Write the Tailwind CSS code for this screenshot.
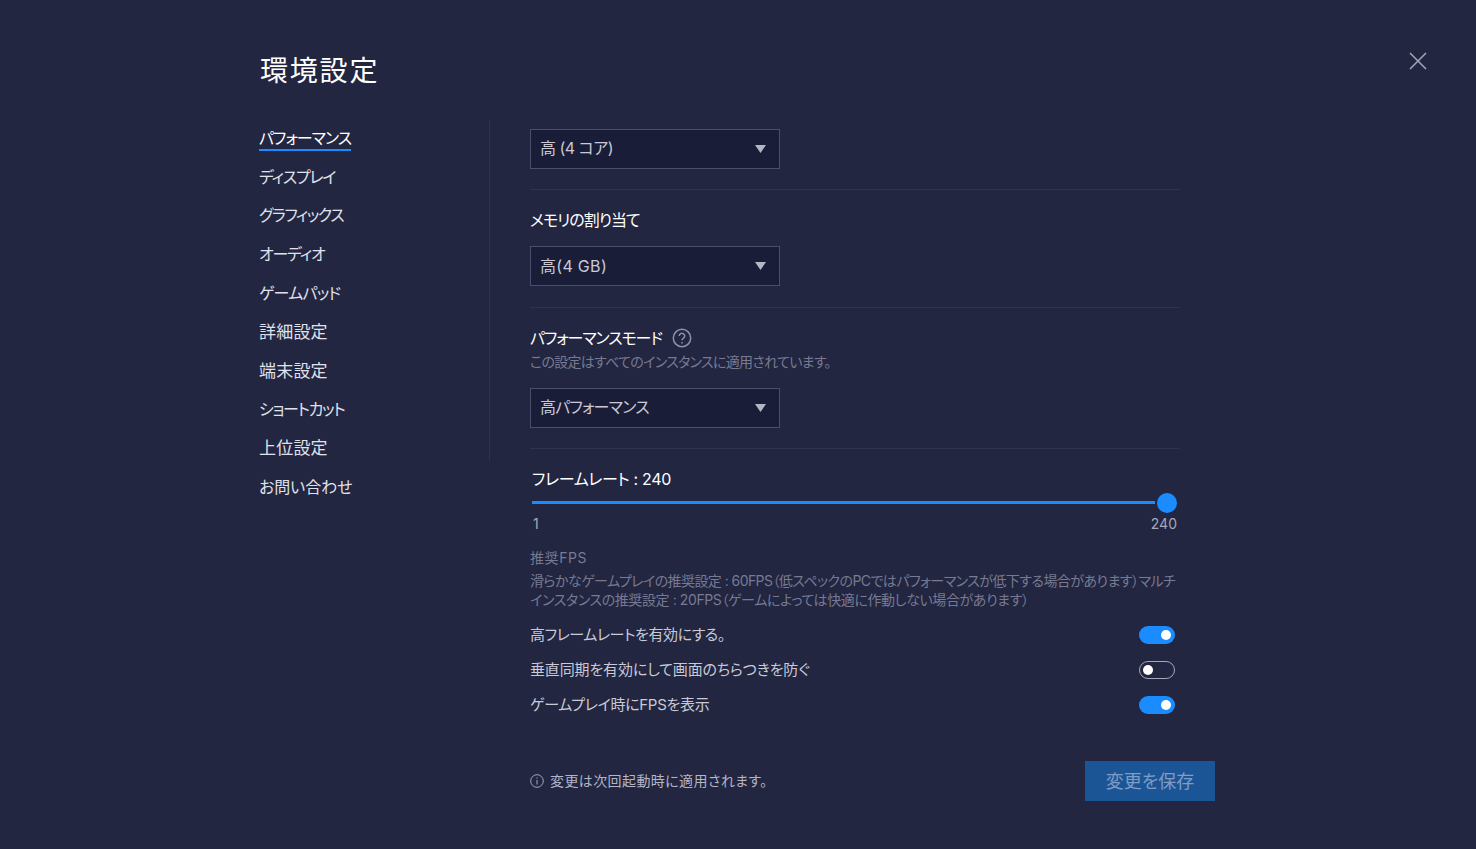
<!DOCTYPE html>
<html lang="ja">
<head>
<meta charset="utf-8">
<title>環境設定</title>
<script src="https://cdn.jsdelivr.net/npm/@tailwindcss/browser@4"></script>
</head>
<body class="bg-[#222641] font-['Inter','Noto_Sans_CJK_JP',sans-serif] [font-feature-settings:'palt'] text-[#e0e1ea] h-[849px] w-[1476px] overflow-hidden relative">

  <!-- close -->
  <button class="absolute left-[1409px] top-[52px] text-[#a5a7ba]">
    <svg width="18" height="18" viewBox="0 0 18 18" fill="none" stroke="currentColor" stroke-width="1.5"><path d="M1 1l16 16M17 1L1 17"/></svg>
  </button>

  <div class="pl-[260px] pt-[52px]">
    <h1 class="text-[28px] leading-[38px] text-white font-normal tracking-[1.800px]">環境設定</h1>

    <div class="flex mt-[30px]">
      <!-- Sidebar -->
      <div class="w-[230px] h-[340px] border-r border-[#2e3350] pt-[6px] text-[16px] leading-[24px]">
        <ul class="flex flex-col gap-[14.7px] -ml-[1px]">
          <li><span class="inline-block text-white border-b-2 border-[#1a8cff] leading-[22px] tracking-[-1px]">パフォーマンス</span></li>
          <li class="tracking-[-1.200px] -translate-y-px">ディスプレイ</li>
          <li class="tracking-[-1.500px] -translate-y-px">グラフィックス</li>
          <li class="tracking-[-1.200px] -translate-y-px">オーディオ</li>
          <li class="tracking-[-.8px] -translate-y-px">ゲームパッド</li>
          <li class="text-[17px] tracking-[.2px]">詳細設定</li>
          <li class="text-[17px] tracking-[.2px]">端末設定</li>
          <li class="tracking-[-1.300px] -translate-y-px">ショートカット</li>
          <li class="text-[17px] tracking-[.2px] -translate-y-px">上位設定</li>
          <li class="tracking-[-.1px]">お問い合わせ</li>
        </ul>
      </div>

      <!-- Main -->
      <div class="w-[685px] pl-[40px] pt-[9px]">
        <div class="w-[650px]">
          <div class="pb-[20px] border-b border-[#2e3350]">
            <div class="w-[250px] h-[40px] bg-[#1a1d38] border border-[#4a4e6b] pl-[9px] pr-[13px] flex items-center justify-between text-[16px] text-[#c9cad6]">
              <span class="tracking-[-.5px] -translate-y-px">高 (4 コア)</span>
              <svg width="11" height="8" viewBox="0 0 11 8" fill="#b4b5c6"><path d="M0 0h11L5.500 8z"/></svg>
            </div>
          </div>

          <div class="pt-[18px] pb-[21px] border-b border-[#2e3350]">
            <div class="text-[16px] leading-[24px] text-white mb-[14px] tracking-[-1px]">メモリの割り当て</div>
            <div class="w-[250px] h-[40px] bg-[#1a1d38] border border-[#4a4e6b] pl-[9px] pr-[13px] flex items-center justify-between text-[16px] text-[#c9cad6]">
              <span class="tracking-[.3px]">高(4 GB)</span>
              <svg width="11" height="8" viewBox="0 0 11 8" fill="#b4b5c6"><path d="M0 0h11L5.500 8z"/></svg>
            </div>
          </div>

          <div class="pt-[18px] pb-[20px] border-b border-[#2e3350]">
            <div class="flex items-center gap-[10px] text-[16px] leading-[24px] text-white">
              <span class="tracking-[-1.100px]">パフォーマンスモード</span>
              <svg width="20" height="20" viewBox="0 0 20 20" fill="none" stroke="#8f91a6" stroke-width="1.500"><circle cx="10" cy="10" r="8.700"/><path d="M7.300 8a2.700 2.700 0 1 1 4.200 2.200c-.9.6-1.500 1-1.500 2.100"/><path d="M10 14v1.500"/></svg>
            </div>
            <div class="text-[14px] leading-[24px] text-[#777a92] mb-[14px] tracking-[-.7px]">この設定はすべてのインスタンスに適用されています。</div>
            <div class="w-[250px] h-[40px] bg-[#1a1d38] border border-[#4a4e6b] pl-[9px] pr-[13px] flex items-center justify-between text-[16px] text-[#c9cad6]">
              <span class="tracking-[-.8px] -translate-y-px">高パフォーマンス</span>
              <svg width="11" height="8" viewBox="0 0 11 8" fill="#b4b5c6"><path d="M0 0h11L5.500 8z"/></svg>
            </div>
          </div>

          <div class="pt-[18px]">
            <div class="text-[16px] leading-[24px] text-white pl-[2px] tracking-[-.35px]">フレームレート : 240</div>
            <!-- slider -->
            <div class="relative h-[3px] w-[623px] ml-[2px] mt-[10px] bg-[#1a8cff]">
              <span class="absolute left-[625px] -top-[8px] w-[20px] h-[20px] rounded-full bg-[#1a8cff]"></span>
            </div>
            <div class="flex justify-between w-[647px] pl-[3px] mt-[10px] text-[14px] leading-[20px] text-[#a5a7ba]">
              <span>1</span><span>240</span>
            </div>
            <div class="text-[14px] leading-[20px] text-[#777a92] mt-[14px] tracking-[.6px]">推奨FPS</div>
            <p class="text-[14px] leading-[19px] text-[#777a92] mt-[3px] whitespace-nowrap"><span class="tracking-[-.56px]">滑らかなゲームプレイの推奨設定 : 60FPS（低スペックのPCではパフォーマンスが低下する場合があります）マルチ</span><br><span class="tracking-[-.4px]">インスタンスの推奨設定 : 20FPS（ゲームによっては快適に作動しない場合があります）</span></p>

            <div class="w-[645px] mt-[14px] flex flex-col gap-[11px] text-[15px] leading-[24px] text-[#c9cad6]">
              <div class="flex items-center justify-between">
                <span class="tracking-[-.45px]">高フレームレートを有効にする。</span>
                <span class="w-[36px] h-[18px] rounded-full bg-[#1a8cff] flex items-center justify-end pr-[4px]"><span class="w-[10px] h-[10px] rounded-full bg-white"></span></span>
              </div>
              <div class="flex items-center justify-between">
                <span class="tracking-[-.15px]">垂直同期を有効にして画面のちらつきを防ぐ</span>
                <span class="w-[36px] h-[18px] rounded-full border-[1.500px] border-[#a5a7ba] flex items-center pl-[3px]"><span class="w-[10px] h-[10px] rounded-full bg-white"></span></span>
              </div>
              <div class="flex items-center justify-between">
                <span class="tracking-[-.3px]">ゲームプレイ時にFPSを表示</span>
                <span class="w-[36px] h-[18px] rounded-full bg-[#1a8cff] flex items-center justify-end pr-[4px]"><span class="w-[10px] h-[10px] rounded-full bg-white"></span></span>
              </div>
            </div>
          </div>

          <!-- footer -->
          <div class="w-[685px] mt-[44px] flex items-center justify-between">
            <div class="flex items-center gap-[6px] text-[14px] text-[#b4b5c6] tracking-[.4px]">
              <svg width="14" height="14" viewBox="0 0 14 14" fill="none" stroke="#a5a7ba" stroke-width="1"><circle cx="7" cy="7" r="6.300"/><path d="M7 6v4.500M7 3.500v1.200"/></svg>
              <span class="-translate-y-px">変更は次回起動時に適用されます。</span>
            </div>
            <button class="w-[130px] h-[40px] bg-[#1c5596] text-[#7f9cc4] text-[18px]">変更を保存</button>
          </div>
        </div>
      </div>
    </div>
  </div>
</body>
</html>
